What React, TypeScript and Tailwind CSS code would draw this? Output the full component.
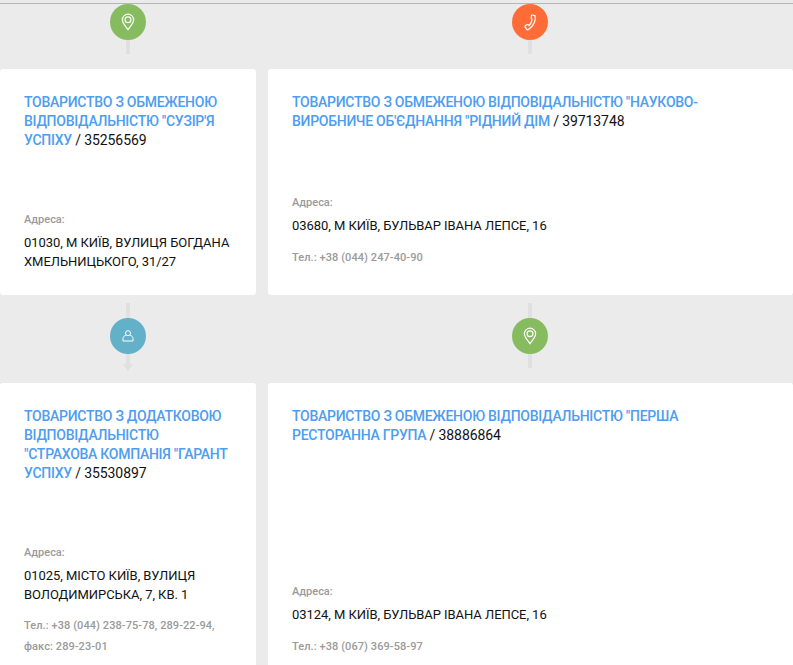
const GREY = "bg-[#e0e0e0]";

function Pin() {
  return (
    <svg width="14" height="18" viewBox="0 0 14 18" fill="none" stroke="white" strokeWidth="1.2">
      <path d="M7 16.6 C5 13.6 1.4 10.6 1.4 6.8 A5.6 5.6 0 0 1 12.6 6.8 C12.6 10.6 9 13.6 7 16.6 Z" />
      <circle cx="7" cy="6.8" r="2.9" />
    </svg>
  );
}
function Phone() {
  return (
    <svg width="14" height="18" viewBox="0 0 14 18" fill="none" stroke="white" strokeWidth="1.2" strokeLinejoin="round">
      <path d="M9.4 2 L12.2 2.8 C13 7.6 10.2 13.6 5.4 16.6 C4.6 17 4 16.8 3.6 16.2 L2.2 14.2 C1.8 13.6 2 13 2.6 12.6 L4.2 11.6 C4.8 11.3 5.4 11.6 6.2 12.6 C7.8 11 8.8 8.8 9 6.4 C8.4 6.2 8.2 5.8 8.2 5 L8.4 2.8 C8.5 2.2 8.9 1.9 9.4 2 Z" />
    </svg>
  );
}
function User() {
  return (
    <svg width="12" height="12" viewBox="0 0 12 12" fill="none" stroke="white" strokeWidth="1">
      <circle cx="6" cy="3.2" r="2.5" />
      <path d="M3.8 5.4 C2 6 1 7 1 8.6 V11 H11 V8.6 C11 7 10 6 8.2 5.4" />
    </svg>
  );
}

function Connector({ color, icon, lineTop, lineBottom, arrow }: { color: string; icon: React.ReactNode; lineTop?: boolean; lineBottom: number; arrow?: boolean }) {
  return (
    <div className="flex flex-col items-center">
      {lineTop && <div className={`w-[4px] h-[15px] ${GREY}`} />}
      <div className={`w-[36px] h-[36px] rounded-full flex items-center justify-center ${color}`}>{icon}</div>
      <div className={`w-[4px] ${GREY}`} style={{ height: lineBottom }} />
      {arrow && <div className="w-0 h-0 border-l-[5px] border-r-[5px] border-t-[7px] border-l-transparent border-r-transparent border-t-[#e0e0e0]" />}
    </div>
  );
}

function Card({ name, code, addr, tel, width, h, telMt }: { name: string; code: string; addr: string; tel?: string; width: string; h: string; telMt?: string }) {
  return (
    <div className={`bg-white rounded-[3px] px-[24px] pt-[24px] flex flex-col shrink-0 ${width} ${h}`}>
      <div className="max-w-[440px] text-[14px] leading-[19px] text-[#111]">
        <a className="font-medium tracking-[-0.27px] text-[#4d9df0]">{name}</a>
        <span className="tracking-[-0.1px]"> / {code}</span>
      </div>
      <div className="flex-1" />
      <div className="text-[11px] leading-[16px] font-medium text-[#9a9a9a]">Адреса:</div>
      <div className="mt-[5px] text-[13px] tracking-[-0.05px] leading-[19px] text-[#111]">{addr}</div>
      {tel && <div className={`${telMt ?? "mt-[12px]"} text-[11px] tracking-[0.08px] leading-[21px] font-medium text-[#9a9a9a]`}>{tel}</div>}
    </div>
  );
}

export default function App() {
  return (
    <div className="w-[793px] h-[665px] overflow-hidden bg-[#ebebeb] font-['Roboto',sans-serif]">
      <div className="h-[4px] border-b border-[#b5b5b5]" />
      <div className="flex h-[65px]">
        <div className="w-[256px] mr-[12px] flex justify-center">
          <Connector color="bg-[#86bb60]" icon={<Pin />} lineBottom={14} />
        </div>
        <div className="w-[523px] flex justify-center">
          <Connector color="bg-[#ff6c37]" icon={<Phone />} lineBottom={14} />
        </div>
      </div>
      <div className="flex gap-[12px]">
        <Card width="w-[256px]" h="h-[226px] pb-[24px]" name="ТОВАРИСТВО З ОБМЕЖЕНОЮ ВІДПОВІДАЛЬНІСТЮ &quot;СУЗІР'Я УСПІХУ" code="35256569" addr="01030, М КИЇВ, ВУЛИЦЯ БОГДАНА ХМЕЛЬНИЦЬКОГО, 31/27" />
        <Card width="w-[525px]" h="h-[226px] pb-[27px]" name="ТОВАРИСТВО З ОБМЕЖЕНОЮ ВІДПОВІДАЛЬНІСТЮ &quot;НАУКОВО-ВИРОБНИЧЕ ОБ'ЄДНАННЯ &quot;РІДНИЙ ДІМ" code="39713748" addr="03680, М КИЇВ, БУЛЬВАР ІВАНА ЛЕПСЕ, 16" tel="Тел.: +38 (044) 247-40-90" />
      </div>
      <div className="flex h-[88px] pt-[8px]">
        <div className="w-[256px] mr-[12px] flex justify-center">
          <Connector color="bg-[#62b1c8]" icon={<User />} lineTop lineBottom={10} arrow />
        </div>
        <div className="w-[523px] flex justify-center">
          <Connector color="bg-[#86bb60]" icon={<Pin />} lineTop lineBottom={14} />
        </div>
      </div>
      <div className="flex gap-[12px]">
        <Card width="w-[256px]" h="h-[300px] pb-[26px]" telMt="mt-[11px]" name="ТОВАРИСТВО З ДОДАТКОВОЮ ВІДПОВІДАЛЬНІСТЮ &quot;СТРАХОВА КОМПАНІЯ &quot;ГАРАНТ УСПІХУ" code="35530897" addr="01025, МІСТО КИЇВ, ВУЛИЦЯ ВОЛОДИМИРСЬКА, 7, КВ. 1" tel="Тел.: +38 (044) 238-75-78, 289-22-94, факс: 289-23-01" />
        <Card width="w-[525px]" h="h-[300px] pb-[26px]" name="ТОВАРИСТВО З ОБМЕЖЕНОЮ ВІДПОВІДАЛЬНІСТЮ &quot;ПЕРША РЕСТОРАННА ГРУПА" code="38886864" addr="03124, М КИЇВ, БУЛЬВАР ІВАНА ЛЕПСЕ, 16" tel="Тел.: +38 (067) 369-58-97" />
      </div>
    </div>
  );
}
